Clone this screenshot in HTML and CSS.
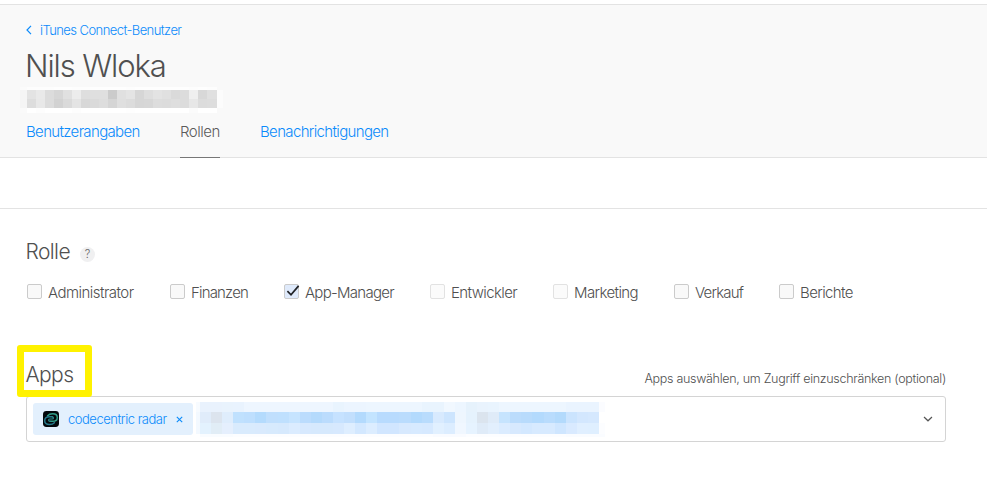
FILE: index.html
```html
<!DOCTYPE html>
<html lang="de">
<head>
<meta charset="utf-8">
<title>iTunes Connect-Benutzer</title>
<link rel="stylesheet" href="styles.css">
</head>
<body>
<header class="header">
  <a class="back"><svg width="6" height="10" viewBox="0 0 6 10"><path d="M5 .8 1 5l4 4.2"/></svg><span>iTunes Connect-Benutzer</span></a>
  <h1 class="name">Nils Wloka</h1>
  <div class="mosaic mosaic-mail" id="mail"></div>
  <nav class="tabs"><a class="tab t1">Benutzerangaben</a><a class="tab t2 active">Rollen</a><a class="tab t3">Benachrichtigungen</a></nav>
</header>
<div class="strip"></div>
<main class="main">
  <div class="heading"><h2 class="h-role">Rolle</h2><span class="help">?</span></div>
  <div class="roles">
    <label class="role r1"><i class="box"></i><span>Administrator</span></label>
    <label class="role r2"><i class="box"></i><span>Finanzen</span></label>
    <label class="role r3"><i class="box checked"><svg width="16" height="15" viewBox="0 0 16 15"><path d="M3.4 7.2 7 10.8 14.6 1.9"/></svg></i><span>App-Manager</span></label>
    <label class="role r4"><i class="box disabled"></i><span>Entwickler</span></label>
    <label class="role r5"><i class="box disabled"></i><span>Marketing</span></label>
    <label class="role r6"><i class="box"></i><span>Verkauf</span></label>
    <label class="role r7"><i class="box"></i><span>Berichte</span></label>
  </div>
  <div class="apps-head"><h2 class="h-apps">Apps</h2><span class="hint">Apps auswählen, um Zugriff einzuschränken (optional)</span></div>
  <div class="select">
    <div class="tag">
      <svg class="app-icon" width="16" height="16" viewBox="0 0 16 16"><rect width="16" height="16" rx="3.4" fill="#03080b"/><g fill="none" stroke-width="1.5" stroke-linecap="round"><path stroke="#2f9c86" d="M4.600 4.700C5.800 3.300 7.500 2.700 9.600 2.700c2.700 0 4.700 1.400 4.700 3.700 0 2.400-2 3.900-4.700 3.900H7.200"/><path stroke="#26778a" d="M11.400 11.700C10.200 13 8.500 13.500 6.500 13.500c-2.700 0-4.800-1.400-4.800-3.700 0-2.500 2.200-4 4.800-4h2.700"/><path stroke="#2a8a88" stroke-width="1.200" d="M9.200 5.800c1.700.2 1.700 2 0 2.200H6.800c-1.700.2-1.700 2.100.4 2.300"/></g></svg>
      <span class="tag-text">codecentric radar</span>
      <svg class="remove" width="7" height="7" viewBox="0 0 7 7"><path d="M.8.8l5.400 5.400M6.200.8.8 6.200"/></svg>
    </div>
    <div class="mosaic mosaic-apps" id="apps"></div>
    <svg class="chevron" width="10" height="6" viewBox="0 0 10 6"><path d="M1 1l4 3.800L9 1"/></svg>
  </div>
</main>
<script src="mosaic.js"></script>
</body>
</html>
```
FILE: styles.css
```css
*, *::before { box-sizing: border-box; }
body { margin: 0; background: #fff; color: #505050; font-family: Inter, "Liberation Sans", sans-serif; font-weight: 300; }
svg { display: block; fill: none; flex: none; }
h1, h2 { margin: 0; font-weight: 300; }
.header { height: 154px; margin-top: 4px; padding-left: 26px; background: #f9f9f9; border-top: 1px solid #e3e3e3; border-bottom: 1px solid #e3e3e3; }
.back { display: flex; align-items: center; gap: 8px; height: 16px; margin-top: 17px; color: #0b8bfb; font-size: 13px; letter-spacing: -.57px; white-space: nowrap; }
.back svg { stroke: #0b8bfb; stroke-width: 1.2; }
.name { height: 40px; margin: 8px 0 1px -1px; line-height: 40px; font-size: 31px; letter-spacing: -1.1px; }
.mosaic { display: grid; }
.mosaic-mail { width: 203px; height: 26px; margin: 0 0 0 -6px; grid-template-columns: 7px repeat(20, 9px) 10px 6px; grid-template-rows: 3px 9px 9px 5px; }
.tabs { display: flex; gap: 40px; height: 45px; }
.tab { height: 45px; line-height: 38px; font-size: 15px; color: #0b8bfb; letter-spacing: -.65px; white-space: nowrap; }
.t1 { width: 114px; }
.t2 { width: 40px; letter-spacing: -.5px; }
.tab.active { color: #5b5b5b; border-bottom: 1px solid #777; }
.strip { height: 51px; border-bottom: 1px solid #e3e3e3; }
.main { width: 946px; padding-left: 26px; }
.heading { display: flex; align-items: center; height: 30px; margin-top: 28px; }
.h-role { width: 54px; margin-top: -2px; font-size: 21px; letter-spacing: -.6px; text-indent: -.5px; }
.help { width: 15px; height: 15px; margin-top: 5px; border-radius: 50%; background: #f0f0f1; color: #666; font-size: 11px; line-height: 15px; text-align: center; }
.roles { display: flex; height: 20px; margin-top: 15px; }
.role { display: flex; align-items: center; gap: 6px; padding-left: 1px; font-size: 15px; letter-spacing: -.6px; white-space: nowrap; }
.r1 { width: 143px; letter-spacing: -.53px; }
.r2 { width: 114px; letter-spacing: -.83px; }
.r3 { width: 146px; letter-spacing: -.73px; }
.r4 { width: 123px; }
.r5 { width: 121px; }
.r6 { width: 105px; letter-spacing: -.8px; }
.box { flex: none; width: 15px; height: 15px; margin-top: -1px; border: 1px solid #cbcbcb; border-radius: 2px; background: #f9f9f9; }
.disabled { border-color: #e2e2e2; background: #fbfbfb; }
.checked { background: #dfeafb; }
.checked svg { margin: -1px; stroke: #202226; stroke-width: 1.7; overflow: visible; }
.apps-head { display: flex; align-items: center; justify-content: space-between; position: relative; height: 36px; margin-top: 55px; }
.h-apps { margin-top: -2px; font-size: 21px; letter-spacing: -.6px; text-indent: -.5px; }
.apps-head::before { content: ""; position: absolute; z-index: 1; left: -9px; top: -12px; width: 75px; height: 52px; border: 7px solid #fff200; border-radius: 3px; }
.hint { margin-top: 7px; font-size: 12.5px; letter-spacing: -.3px; white-space: nowrap; }
.select { display: flex; align-items: center; height: 46px; margin-top: 3px; padding: 0 12px 0 6px; border: 1px solid #d4d4d4; border-radius: 3px; }
.tag { display: flex; align-items: center; width: 160px; height: 32px; padding-left: 10px; border-radius: 3px; background: #e3f0fd; color: #0b8bfb; font-size: 13px; letter-spacing: -.48px; }
.tag-text { width: 99px; margin: 0 9px 0 9px; white-space: nowrap; }
.remove { stroke: #0b8bfb; stroke-width: 1.1; }
.mosaic-apps { width: 409px; height: 35px; margin-left: 3px; grid-template-columns: 4px repeat(36, 1fr) 6px; grid-template-rows: 10px 11px 11px 3px; }
.chevron { margin-left: auto; stroke: #555; stroke-width: 1.2; }
```
FILE: mosaic.js
```js
function fill(id, rows) {
  var host = document.getElementById(id);
  rows.forEach(function (row) {
    row.forEach(function (c) {
      var cell = document.createElement("i");
      cell.style.background = "#" + c;
      host.appendChild(cell);
    });
  });
}
function gray(s) { return s.split(" ").map(function (v) { return v + v + v; }); }
function same(n, c) { return Array(n).fill(c); }
fill("mail", [
  gray("fb fd fd fd fe fe fd fd fe fe fe fe fd fe fe fe fe fe fe fd fe fd f9"),
  gray("f5 e3 e9 dc d6 e0 ec de df df cb e0 e4 d6 de e3 e0 da dc ef d8 e0 fc"),
  gray("f5 dd e8 dc d2 da e4 d8 da dd d5 df dc d6 d7 dd dc de dc e7 dc dd fc"),
  gray("fa ff fd ff ff ff fd ff ff ff ff ff fe ff ff ff ff ff ff fb ff ff f9")
]);
fill("apps", [
  "f7fbff e9f2fd e9f2fd e9f3fd e9f3fe".split(" ").concat(same(8, "eef6ff"), "e9f4fe", same(2, "ecf5ff"), same(5, "edf6ff"), "e9f4fe", "e9f4fe", "f1f8ff", "edf6ff", "e6f2fc", "e9f3fd", "e9f4fe", same(6, "edf6ff"), same(3, "eaf4ff"), "fbfcff"),
  "f3f9ff e0ecfa dce4ee dfedfc c0e1fe bedffe b4dbfd c0dffd bfe0fe c6e4ff bbdcfd b4dafc bbdcfd c6e2ff c2dffd b3dafd c3e4ff b8dbfe b8dbfe badcfd b3dafd b9dcfd d8eafe cde5fe eef6fe e5f2fd dbe4ee dfebf8 c6e4fe bbdcfc b8dbfc b3dafd b9dcfd b3dafc cbe4fe d3e7fe d5e8fe ffffff".split(" "),
  "f3f9ff e3f2fe e1edf6 e5effd d9ebfd d9ebfd d9eafd d7eafd d6e9fd dbecff d7e9fe d6e9fd d6e9fd d7e9fe deeeff d3e8ff dcedff d1e6ff d1e6ff d7e9fe d7eaff d6e9ff e1f0ff dcedff f0f7ff e6f3ff dfebf8 e2effd dbecff d7e9fe d3e8ff d7eaff d7eaff cfe6ff d9eaff e0efff dfefff fcfdff".split(" "),
  ["ffffff"].concat(same(3, "f9fcff"), same(18, "fcfdff"), same(3, "f9fbff"), same(9, "fcfdff"), same(4, "fafcff"))
]);
```
